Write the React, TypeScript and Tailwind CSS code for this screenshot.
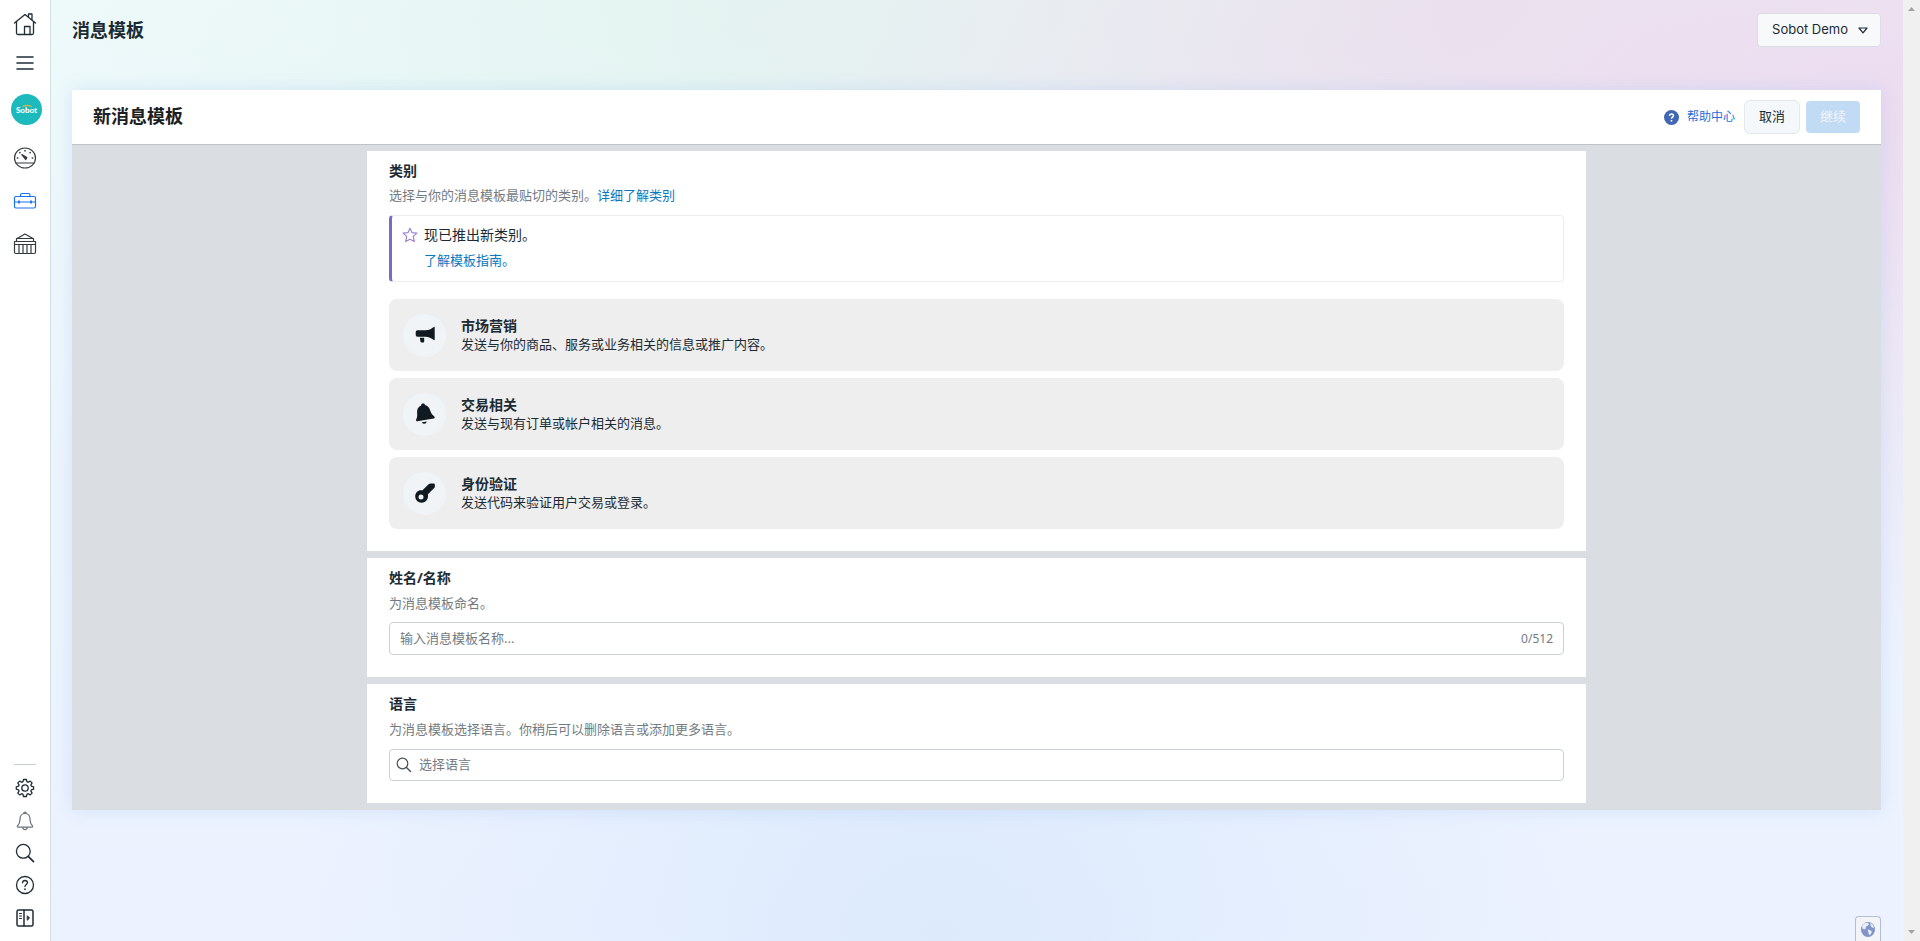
import React from "react";

const bodyFont = "font-['Noto_Sans','Noto_Sans_CJK_SC',sans-serif]";
const line = { fill: "none", stroke: "currentColor", strokeLinecap: "round", strokeLinejoin: "round" } as const;

function RailItem({ label, className = "", children }: { label: string; className?: string; children: React.ReactNode }) {
  return (
    <button type="button" aria-label={label} className={`flex w-[50px] items-center justify-center ${className}`}>
      {children}
    </button>
  );
}

function Sidebar() {
  return (
    <nav className="flex w-[51px] shrink-0 flex-col items-start border-r border-[#d3dfe2] bg-white text-[#1f2d37]">
      <RailItem label="Home" className="mt-3 h-6">
        <svg width="24" height="24" viewBox="0 0 24 24" {...line} strokeWidth="1.3">
          <path d="M1.500 11 12 2.500 22.500 11M3.500 9.600V21q0 1.500 1.500 1.500h14q1.500 0 1.500-1.500V9.600M15.500 5V2h3.500v5.800M11.500 22.500V14.500h5.500v8" />
        </svg>
      </RailItem>
      <RailItem label="Menu" className="mt-[15px] h-6">
        <svg width="18" height="16" viewBox="0 0 18 16" {...line} strokeWidth="1.6">
          <path d="M1 2h16M1 8h16M1 14h16" />
        </svg>
      </RailItem>
      <RailItem label="Sobot" className="mt-[18px] h-8 pl-[3px]">
        <svg width="31" height="31" viewBox="0 0 31 31">
          <circle cx="15.500" cy="15.500" r="15.500" fill="#1cb9bd" />
          <path d="M11.500 12.800q4.500-3 9.500 0" fill="none" stroke="#e3b93c" strokeWidth="1.300" />
          <text x="15.500" y="19" textAnchor="middle" fontSize="8" fontWeight="900" fill="#fff" fontFamily="Lato, sans-serif">Sobot</text>
        </svg>
      </RailItem>
      <RailItem label="Dashboard" className="mt-[21px] h-6 text-[#333b41]">
        <svg width="24" height="24" viewBox="0 0 24 24" {...line} strokeWidth="1.2">
          <ellipse cx="12" cy="12" rx="10.500" ry="10" />
          <path d="M2.700 17h18.600" />
          <path d="M12 4.500v.4M6.800 6.600l.2.200M17.200 6.600l-.2.200M4.300 12h.5M19.200 12h.5" strokeWidth="1.500" />
          <path d="m8.800 8.600 5 2.900-1 2.100z" fill="currentColor" />
        </svg>
      </RailItem>
      <RailItem label="Tools" className="mt-[19px] h-6 text-[#1a73e8]">
        <svg width="24" height="18" viewBox="0 0 24 18" {...line} strokeWidth="1.200">
          <rect x="1.500" y="4.500" width="21" height="11.500" rx="1.500" />
          <path d="M7.500 4.500V3q0-1.500 1.500-1.500h6.500Q17 1.500 17 3v1.500M1.500 10h21" />
          <path d="M6 9.200v1.600M18 9.200v1.600" strokeWidth="1.800" />
        </svg>
      </RailItem>
      <RailItem label="Company" className="mt-[19px] h-6 text-[#333b41]">
        <svg width="24" height="24" viewBox="0 0 24 24" {...line} strokeWidth="1.200">
          <path d="M4 6.500 12 2l8 4.500M3.500 6.500h17v3h-17zM1.500 9.500h21v3h-21zM1.500 12.500V20q0 1.500 1.500 1.500h18q1.500 0 1.500-1.500v-7.500M6 12.500v9M10 12.500v9M14 12.500v9M18 12.500v9" />
        </svg>
      </RailItem>

      <hr className="mt-auto ml-[14px] w-[22px] border-[#c4ccd4]" />
      <RailItem label="Settings" className="mt-[11px] h-6">
        <svg width="20" height="20" viewBox="0 0 20 20" {...line} strokeWidth="1.300">
          <circle cx="10" cy="10" r="3.200" />
          <path d="m8.500 1.500-.5 2.200-1.300.6-2-1.200-1.900 1.800 1.200 2-.5 1.300-2.200.6v2.400l2.200.6.5 1.300-1.200 2 1.900 1.800 2-1.200 1.300.6.500 2.200h2.900l.5-2.200 1.300-.6 2 1.200 1.900-1.800-1.200-2 .5-1.300 2.200-.6V8.800l-2.200-.6-.5-1.300 1.200-2-1.900-1.800-2 1.200-1.300-.6-.5-2.200z" />
        </svg>
      </RailItem>
      <RailItem label="Notifications" className="mt-[9px] h-6 text-[#6d757c]">
        <svg width="18" height="20" viewBox="0 0 18 20" {...line} strokeWidth="1.200">
          <path d="M9 2.500c-4 0-5 3-5 6 0 4-1 5-2.500 6.500-.4.500-.2 1.200.5 1.200h14c.7 0 .9-.7.500-1.200C15 13.500 14 12.500 14 8.500c0-3-1-6-5-6zM7.700 2.500q0-1.400 1.300-1.400t1.300 1.400M6.700 16.400q.3 2.200 2.300 2.200t2.300-2.200" />
        </svg>
      </RailItem>
      <RailItem label="Search" className="mt-2 h-6">
        <svg width="20" height="20" viewBox="0 0 20 20" {...line} strokeWidth="1.300">
          <circle cx="8.300" cy="8.300" r="6.900" />
          <path d="m13.200 13.400 5.300 5.200" strokeWidth="1.700" />
        </svg>
      </RailItem>
      <RailItem label="Help" className="mt-2 h-6">
        <svg width="20" height="20" viewBox="0 0 20 20" {...line} strokeWidth="1.300">
          <circle cx="10" cy="10" r="8.500" />
          <path d="M7.500 7.800q.2-2.300 2.500-2.300t2.500 2.100c0 1.900-2.500 1.900-2.500 4" />
          <path d="M10 14.200v.1" strokeWidth="1.700" />
        </svg>
      </RailItem>
      <RailItem label="Expand" className="mt-[9px] mb-[11px] h-6">
        <svg width="18" height="18" viewBox="0 0 18 18" {...line} strokeWidth="1.500">
          <rect x="1" y="1" width="16" height="16" rx="1.500" />
          <path d="M8 1v16" />
          <path d="M3.500 4.500h2M3.500 7h2M3.500 9.500h2" strokeWidth="1.200" />
          <path d="m11.500 7 2 2-2 2z" fill="currentColor" strokeWidth="1" />
        </svg>
      </RailItem>
    </nav>
  );
}

function Megaphone() {
  return (
    <svg width="20" height="20" viewBox="0 0 20 20" fill="#111a20">
      <path d="M2.500 5.300h7.800c3.500 0 6-1.300 8.500-3.300.5-.3.900-.1.900.5v12c0 .6-.4.800-.9.500-2.500-2-5-3.300-8.500-3.300H2.500Q.7 11.700.7 10V7q0-1.700 1.800-1.700zM4.800 12.800h4.400v3.800q0 1-1 1H6.500q-.8 0-1-.8z" />
    </svg>
  );
}

function Bell() {
  return (
    <svg width="20" height="22" viewBox="0 0 20 22" fill="#111a20">
      <path d="M6.200 2.600C5.900.3 9.500-.2 9.900 2c3 .6 4.400 2.700 5.300 5.500.8 2.700 1.900 4.200 3.900 5.800.9.700.8 2-.4 2.200L2.300 18.300c-1 .1-1.500-.8-1.100-1.700 1-2.300 1.200-4 .900-6.600-.3-3.500 1.200-6.300 4.100-7.400zM6.800 19.200l5-.8q-.5 2.400-2.500 2.400-1.600 0-2.500-1.600z" />
    </svg>
  );
}

function Key() {
  return (
    <svg width="22" height="22" viewBox="0 0 22 22" fill="#111a20">
      <path fillRule="evenodd" d="M16.500 1.400h3.300q1 0 1 1v2.500q0 .5-.4.900l-6.500 6.500c.8 4.700-1.900 8.500-6.300 8.500A6.200 6.200 0 0 1 1.200 14.600c0-4.200 3.300-6.900 7-6.100l6.700-6.500q.7-.6 1.600-.6zM7 12.400a2.500 2.500 0 1 0 0 5 2.500 2.500 0 0 0 0-5z" />
    </svg>
  );
}

const categories = [
  { title: "市场营销", text: "发送与你的商品、服务或业务相关的信息或推广内容。", icon: <Megaphone /> },
  { title: "交易相关", text: "发送与现有订单或帐户相关的消息。", icon: <Bell /> },
  { title: "身份验证", text: "发送代码来验证用户交易或登录。", icon: <Key /> },
];

function Section({ title, children }: { title: string; children: React.ReactNode }) {
  return (
    <section className="bg-white px-[22px] pt-[10px] pb-[22px]">
      <h3 className="text-sm leading-5 font-bold text-[#1c2b33]">{title}</h3>
      {children}
    </section>
  );
}

export default function App() {
  return (
    <div className={`flex min-h-screen text-[13px] ${bodyFont} text-[#1c2b33]`}>
      <Sidebar />
      <div className="relative min-w-0 flex-1 bg-[radial-gradient(ellipse_at_48%_100%,#dceafc_0%,transparent_48%),radial-gradient(ellipse_at_100%_12%,#ecdcf0_0%,transparent_48%),radial-gradient(ellipse_at_38%_0%,#e3f4f0_0%,transparent_45%),radial-gradient(ellipse_at_75%_0%,#e8e7e9_0%,transparent_35%),linear-gradient(180deg,#eefafa_0%,#ecf4fd_50%,#ecf2ff_100%)] pr-[22px] pl-[21px]">
        <header className="flex h-[90px] items-start justify-between">
          <h1 className="mt-4 text-lg leading-7 font-bold">消息模板</h1>
          <button type="button" className="mt-[13px] flex h-[34px] items-center gap-[10px] rounded border border-[#dcdde4] bg-[#f7f9fb] pr-3 pl-[14px] font-['Inter',sans-serif] text-[13px]">
            Sobot Demo
            <svg width="10" height="7" viewBox="0 0 10 7" {...line} strokeWidth="1.200">
              <path d="M1 1h8L5 5.800z" />
            </svg>
          </button>
        </header>

        <main className="bg-[#dadde1] shadow-[0_0_16px_rgba(120,170,240,0.22)]">
          <div className="flex h-[55px] items-center justify-between border-b border-[#bfc4ca] bg-white px-[21px]">
            <h2 className="pb-[2px] text-lg leading-7 font-bold text-[#1c1e21]">新消息模板</h2>
            <div className="flex items-center">
              <a href="#help" className="mr-[9px] flex items-center gap-2 text-xs text-[#216fdb]">
                <svg width="15" height="15" viewBox="0 0 15 15" fill="none">
                  <circle cx="7.500" cy="7.500" r="7.500" fill="#4267b2" />
                  <path d="M5.500 5.900q.1-1.900 2-1.900t2 1.700c0 1.500-2 1.500-2 3" stroke="#fff" strokeWidth="1.500" />
                  <path d="M7.500 10v1.600" stroke="#fff" strokeWidth="1.600" />
                </svg>
                帮助中心
              </a>
              <button type="button" className="h-[34px] rounded-md border border-[#e4e7eb] bg-[#f5f8fa] px-[14px]">取消</button>
              <button type="button" disabled className="ml-[6px] h-8 rounded bg-[#c2dbf5] px-[14px] text-[#f0f6fc]">继续</button>
            </div>
          </div>

          <div className="mx-auto flex w-full max-w-[1219px] flex-col gap-[7px] pt-[6px] pb-[7px]">
            <Section title="类别">
              <p className="mt-1 leading-5 text-[#737b82]">
                选择与你的消息模板最贴切的类别。<a href="#categories" className="text-[#0a78be]">详细了解类别</a>
              </p>
              <div className="mt-[10px] flex h-[67px] gap-[6px] rounded border border-l-[3px] border-[#eceef0] border-l-[#7e69bf] pt-[9px] pl-[10px]">
                <svg width="16" height="16" viewBox="0 0 16 16" className="mt-[2px]" {...line} stroke="#9b84d1" strokeWidth="1.200">
                  <path d="m8 1.300 2 4.300 4.900.5-3.600 3.300 1 5.200L8 12.200l-4.300 2.400 1-5.200L1.100 6.100l4.900-.5z" />
                </svg>
                <div>
                  <p className="text-sm leading-5">现已推出新类别。</p>
                  <a href="#guide" className="mt-[5px] block leading-5 text-[#0a78be]">了解模板指南。</a>
                </div>
              </div>
              <div className="mt-[17px] flex flex-col gap-[7px]">
                {categories.map((c) => (
                  <button key={c.title} type="button" className="flex h-[72px] items-center gap-[15px] rounded-lg bg-[#eee] px-[14px] text-left">
                    <span className="flex size-[43px] items-center justify-center rounded-full bg-[#f0f4f7]">{c.icon}</span>
                    <span>
                      <span className="block text-sm leading-[18px] font-bold">{c.title}</span>
                      <span className="block leading-[18px]">{c.text}</span>
                    </span>
                  </button>
                ))}
              </div>
            </Section>

            <Section title="姓名/名称">
              <label htmlFor="template-name" className="mt-[5px] block leading-5 text-[#737b82]">为消息模板命名。</label>
              <div className="mt-[9px] flex h-[33px] items-center rounded border border-[#ccd0d9] px-[10px]">
                <input id="template-name" placeholder="输入消息模板名称..." className="min-w-0 flex-1 outline-none placeholder:text-[#737b82]" />
                <span className="text-xs text-[#737b82]">0/512</span>
              </div>
            </Section>

            <Section title="语言">
              <label htmlFor="template-language" className="mt-[5px] block leading-5 text-[#737b82]">为消息模板选择语言。你稍后可以删除语言或添加更多语言。</label>
              <div className="mt-[10px] flex h-8 items-center gap-[7px] rounded border border-[#ccd0d9] px-[6px]">
                <svg width="16" height="16" viewBox="0 0 16 16" {...line} stroke="#46525b" strokeWidth="1.200">
                  <circle cx="6.500" cy="6.500" r="5.300" />
                  <path d="m10.500 10.500 4 4" strokeWidth="1.500" />
                </svg>
                <input id="template-language" placeholder="选择语言" className="min-w-0 flex-1 outline-none placeholder:text-[#737b82]" />
              </div>
            </Section>
          </div>
        </main>

        <button type="button" aria-label="Language" className="absolute right-[22px] bottom-0 flex h-[25px] w-[26px] items-center justify-center rounded-t-sm border border-b-0 border-[#b4bcd6] bg-[#f3f4f7]">
          <svg width="14" height="15" viewBox="0 0 14 15">
            <ellipse cx="7" cy="7.500" rx="7" ry="7.500" fill="#8094c8" />
            <path d="M1 4Q3 .6 6.500.7L8 2 6.500 4 5 4.500 4.500 7 3 7.500 1.500 6.500zM9 1l3 2 1 3-2-.5-1.500-2zM6.500 7.500 9 8l2 2-1.500 2.500-1.500.5-.5-2.500z" fill="#e9edf6" />
          </svg>
        </button>
      </div>
      <div aria-hidden="true" className="flex w-[17px] shrink-0 flex-col items-center justify-between bg-[#f0f0f0] py-[7px]">
        <svg width="7" height="4" viewBox="0 0 7 4"><path d="M0 4 3.500 0 7 4z" fill="#a3a3a3" /></svg>
        <svg width="7" height="4" viewBox="0 0 7 4"><path d="M0 0h7L3.500 4z" fill="#a3a3a3" /></svg>
      </div>
    </div>
  );
}
